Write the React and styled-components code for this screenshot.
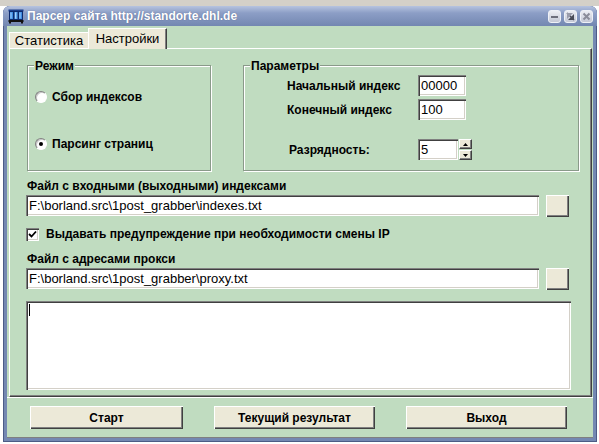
import React from "react";
import styled, { createGlobalStyle } from "styled-components";

const GlobalStyle = createGlobalStyle`
  html, body {
    margin: 0;
    padding: 0;
    background: #fff;
  }
  body {
    font-family: "Liberation Sans", Arial, sans-serif;
  }
`;

const Desktop = styled.div`
  width: 599px;
  height: 444px;
  overflow: hidden;
  box-sizing: border-box;
  padding: 6px 0 0 3px;
  background: linear-gradient(#d4d0c8 0 6px, #fff 6px);
`;

const Window = styled.div`
  width: 594px;
  height: 436px;
  display: flex;
  flex-direction: column;
  background: #7488b2;
  border-radius: 7px 7px 0 0;
  box-shadow: inset 1px 0 #4c5c86, inset -1px 0 #4c5c86, inset 0 -1px #4c5c86;
`;

const TitleBar = styled.div`
  height: 20px;
  flex: none;
  display: flex;
  align-items: center;
  gap: 3px;
  padding: 0 4px 0 5px;
  border-radius: 7px 7px 0 0;
  background: linear-gradient(#b6c3df, #8c9ec6 35%, #7387b1);
  color: #fff;
  font: bold 12px "Liberation Sans", Arial, sans-serif;
`;

const Caption = styled.span`
  flex: 1;
  white-space: nowrap;
  text-shadow: 0 0 1px rgba(40, 50, 90, 0.5);
`;

const CaptionButtons = styled.div`
  display: flex;
  gap: 3px;
  margin-top: 1px;
`;

const CaptionButton = styled.div`
  width: 13px;
  height: 13px;
  box-sizing: border-box;
  border-radius: 3px;
  border: 1px solid #eef1f7;
  background: linear-gradient(#eceef4, #c4c8d6);
  display: flex;
  align-items: center;
  justify-content: center;
`;

const Client = styled.div`
  flex: 1;
  margin: 0 4px 4px 4px;
  background: #c0dcc0;
  display: flex;
  flex-direction: column;
`;

const TabStrip = styled.div`
  height: 22px;
  flex: none;
  display: flex;
  align-items: flex-end;
  padding-left: 2px;
`;

const Tab = styled.div`
  width: 79px;
  height: ${(p) => (p.$active ? "21px" : "16px")};
  box-sizing: border-box;
  background: #ece9d8;
  border-top: 1px solid #fff;
  border-left: 1px solid #fff;
  border-right: ${(p) => (p.$active ? "1px solid #404040" : "none")};
  box-shadow: ${(p) => (p.$active ? "inset -1px 0 #808080" : "none")};
  margin-bottom: ${(p) => (p.$active ? "-1px" : "0")};
  position: relative;
  z-index: ${(p) => (p.$active ? 1 : 0)};
  display: flex;
  justify-content: center;
  padding-top: ${(p) => (p.$active ? "3px" : "1px")};
  font-size: 13px;
  line-height: 14px;
  color: #000;
`;

const Page = styled.div`
  height: 349px;
  flex: none;
  box-sizing: border-box;
  margin: 0 1px 0 2px;
  border-top: 1px solid #fff;
  border-left: 1px solid #fff;
  border-right: 1px solid #404040;
  border-bottom: 1px solid #404040;
  box-shadow: inset -1px -1px #808080;
  padding: 16px 0 0 16px;
  display: flex;
  flex-direction: column;
`;

const GroupRow = styled.div`
  display: flex;
  gap: 32px;
  margin-left: 1px;
`;

const Group = styled.div`
  width: ${(p) => p.$width}px;
  height: 106px;
  box-sizing: border-box;
  border: 1px solid #8a9a8a;
  box-shadow: inset 1px 1px #fff, 1px 1px #fff;
  display: flex;
  flex-direction: column;
`;

const Legend = styled.div`
  align-self: flex-start;
  margin: -7px 0 0 6px;
  padding: 0 1px;
  background: #c0dcc0;
  font-weight: bold;
  font-size: 12px;
  line-height: 14px;
`;

const RadioRow = styled.div`
  display: flex;
  align-items: center;
  gap: 5px;
  height: 12px;
  padding-left: 7px;
  margin-top: ${(p) => p.$top}px;
  font-weight: bold;
  font-size: 12px;
`;

const RadioDot = styled.span`
  width: 12px;
  height: 12px;
  box-sizing: border-box;
  border-radius: 50%;
  background: #fff;
  border: 1px solid;
  border-color: #808080 #fff #fff #808080;
  box-shadow: inset 1px 1px #c8c8c8;
  display: flex;
  align-items: center;
  justify-content: center;
  &::after {
    content: "";
    width: 4px;
    height: 4px;
    border-radius: 50%;
    background: ${(p) => (p.$checked ? "#000" : "transparent")};
  }
`;

const ParamRow = styled.div`
  display: flex;
  align-items: center;
  padding-left: 43px;
  margin-top: ${(p) => p.$top}px;
`;

const ParamLabel = styled.span`
  width: ${(p) => (p.$indent ? 129 : 131)}px;
  padding-left: ${(p) => (p.$indent ? 2 : 0)}px;
  font-weight: bold;
  font-size: 12px;
  white-space: nowrap;
`;

const TextBox = styled.input`
  width: ${(p) => p.$width}px;
  height: 21px;
  box-sizing: border-box;
  border: none;
  outline: none;
  margin: 0;
  padding: 0 0 0 3px;
  background: #fff;
  font: 13px "Liberation Sans", Arial, sans-serif;
  color: #000;
  box-shadow: inset 1px 1px #808080, inset 2px 2px #404040, inset -1px -1px #fff,
    inset -2px -2px #d4d0c8;
`;

const Spin = styled.div`
  display: flex;
  gap: 1px;
`;

const SpinButtons = styled.div`
  display: flex;
  flex-direction: column;
  gap: 1px;
`;

const SpinButton = styled.div`
  width: 13px;
  height: 10px;
  box-sizing: border-box;
  background: #ece9d8;
  border-top: 1px solid #fff;
  border-left: 1px solid #fff;
  border-right: 1px solid #404040;
  border-bottom: 1px solid #404040;
  box-shadow: inset -1px -1px #808080;
  display: flex;
  align-items: center;
  justify-content: center;
`;

const FieldLabel = styled.div`
  margin-top: ${(p) => p.$top}px;
  font-weight: bold;
  font-size: 12px;
  line-height: 14px;
  margin-left: 1px;
`;

const PathRow = styled.div`
  display: flex;
  gap: 7px;
  margin-top: 2px;
`;

const RaisedButton = styled.button`
  width: ${(p) => p.$width}px;
  height: ${(p) => p.$height}px;
  box-sizing: border-box;
  margin: 0;
  padding: 0;
  background: #ece9d8;
  border: none;
  box-shadow: inset 1px 1px #fff, inset -1px -1px #404040, inset -2px -2px #808080;
  font: bold 12px "Liberation Sans", Arial, sans-serif;
  color: #000;
`;

const CheckRow = styled.div`
  display: flex;
  align-items: center;
  gap: 7px;
  margin-top: 10px;
  font-weight: bold;
  font-size: 12px;
`;

const CheckBox = styled.span`
  width: 13px;
  height: 13px;
  box-sizing: border-box;
  background: #fff;
  box-shadow: inset 1px 1px #808080, inset 2px 2px #404040, inset -1px -1px #fff,
    inset -2px -2px #d4d0c8;
  display: flex;
  align-items: center;
  justify-content: center;
`;

const Memo = styled.div`
  width: 545px;
  height: 89px;
  margin-top: 11px;
  box-sizing: border-box;
  background: #fff;
  padding: 3px 0 0 3px;
  box-shadow: inset 1px 1px #808080, inset 2px 2px #404040, inset -1px -1px #fff,
    inset -2px -2px #d4d0c8;
`;

const Caret = styled.span`
  display: block;
  width: 1px;
  height: 12px;
  background: #000;
`;

const BottomPanel = styled.div`
  flex: 1;
  box-sizing: border-box;
  border-top: 1px solid #fff;
  border-bottom: 1px solid #808080;
  display: flex;
  align-items: flex-start;
  gap: 31px;
  padding: 8px 0 0 23px;
`;

const AppIcon = () => (
  <svg width="16" height="16" viewBox="0 0 16 16">
    <rect x="0.5" y="1.5" width="15" height="2" fill="#1c3f8c" />
    <rect x="1.5" y="3.5" width="4" height="8" fill="#3d8ae0" stroke="#0d2a6e" />
    <rect x="6" y="3.5" width="4" height="8" fill="#5fa6f0" stroke="#0d2a6e" />
    <rect x="10.5" y="3.5" width="4" height="8" fill="#3d8ae0" stroke="#0d2a6e" />
    <rect x="2.5" y="4.5" width="1" height="6" fill="#a8d4ff" />
    <rect x="7" y="4.5" width="1" height="6" fill="#a8d4ff" />
    <rect x="11.5" y="4.5" width="1" height="6" fill="#a8d4ff" />
    <rect x="0.5" y="12" width="15" height="2" fill="#111" />
    <rect x="1" y="14" width="2" height="1.5" fill="#111" />
    <rect x="13" y="14" width="2" height="1.5" fill="#111" />
  </svg>
);

const MinimizeGlyph = () => (
  <svg width="9" height="9" viewBox="0 0 9 9">
    <rect x="1" y="4" width="7" height="2" fill="#6c6e7c" />
  </svg>
);

const MaximizeGlyph = () => (
  <svg width="9" height="9" viewBox="0 0 9 9">
    <path d="M1 1 L8 8" stroke="#4a4c58" strokeWidth="1.4" />
    <path d="M8 2 L8 8 L2 8 Z" fill="#4a4c58" />
    <path d="M1 1 L7 1 L1 7 Z" fill="#9a9cab" />
  </svg>
);

const CloseGlyph = () => (
  <svg width="9" height="9" viewBox="0 0 9 9">
    <path d="M1.5 1.5 L7.5 7.5 M7.5 1.5 L1.5 7.5" stroke="#8a8c9a" strokeWidth="2" />
  </svg>
);

const CheckMark = () => (
  <svg width="9" height="9" viewBox="0 0 9 9">
    <path d="M1 4 L3.5 6.5 L8 1.5" stroke="#000" strokeWidth="1.8" fill="none" />
  </svg>
);

const Arrow = ({ up }) => (
  <svg width="5" height="3" viewBox="0 0 5 3">
    <path d={up ? "M2.5 0 L5 3 L0 3 Z" : "M0 0 L5 0 L2.5 3 Z"} fill="#000" />
  </svg>
);

export default function App() {
  return (
    <>
      <GlobalStyle />
      <Desktop>
        <Window>
          <TitleBar>
            <AppIcon />
            <Caption>Парсер сайта http://standorte.dhl.de</Caption>
            <CaptionButtons>
              <CaptionButton>
                <MinimizeGlyph />
              </CaptionButton>
              <CaptionButton>
                <MaximizeGlyph />
              </CaptionButton>
              <CaptionButton>
                <CloseGlyph />
              </CaptionButton>
            </CaptionButtons>
          </TitleBar>

          <Client>
            <TabStrip>
              <Tab>Статистика</Tab>
              <Tab $active>Настройки</Tab>
            </TabStrip>

            <Page>
              <GroupRow>
                <Group $width={184}>
                  <Legend>Режим</Legend>
                  <RadioRow $top={18}>
                    <RadioDot />
                    Сбор индексов
                  </RadioRow>
                  <RadioRow $top={35}>
                    <RadioDot $checked />
                    Парсинг страниц
                  </RadioRow>
                </Group>

                <Group $width={336}>
                  <Legend>Параметры</Legend>
                  <ParamRow $top={2}>
                    <ParamLabel>Начальный индекс</ParamLabel>
                    <TextBox $width={48} defaultValue="00000" readOnly />
                  </ParamRow>
                  <ParamRow $top={3}>
                    <ParamLabel>Конечный индекс</ParamLabel>
                    <TextBox $width={48} defaultValue="100" readOnly />
                  </ParamRow>
                  <ParamRow $top={19}>
                    <ParamLabel $indent>Разрядность:</ParamLabel>
                    <Spin>
                      <TextBox $width={40} defaultValue="5" readOnly />
                      <SpinButtons>
                        <SpinButton>
                          <Arrow up />
                        </SpinButton>
                        <SpinButton>
                          <Arrow />
                        </SpinButton>
                      </SpinButtons>
                    </Spin>
                  </ParamRow>
                </Group>
              </GroupRow>

              <FieldLabel $top={8}>Файл с входными (выходными) индексами</FieldLabel>
              <PathRow>
                <TextBox
                  $width={513}
                  defaultValue="F:\borland.src\1post_grabber\indexes.txt"
                  readOnly
                />
                <RaisedButton $width={23} $height={22} />
              </PathRow>

              <CheckRow>
                <CheckBox>
                  <CheckMark />
                </CheckBox>
                Выдавать предупреждение при необходимости смены IP
              </CheckRow>

              <FieldLabel $top={11}>Файл с адресами прокси</FieldLabel>
              <PathRow>
                <TextBox
                  $width={513}
                  defaultValue="F:\borland.src\1post_grabber\proxy.txt"
                  readOnly
                />
                <RaisedButton $width={23} $height={22} />
              </PathRow>

              <Memo>
                <Caret />
              </Memo>
            </Page>

            <BottomPanel>
              <RaisedButton $width={153} $height={23}>Старт</RaisedButton>
              <RaisedButton $width={161} $height={23}>Текущий результат</RaisedButton>
              <RaisedButton $width={161} $height={23}>Выход</RaisedButton>
            </BottomPanel>
          </Client>
        </Window>
      </Desktop>
    </>
  );
}
